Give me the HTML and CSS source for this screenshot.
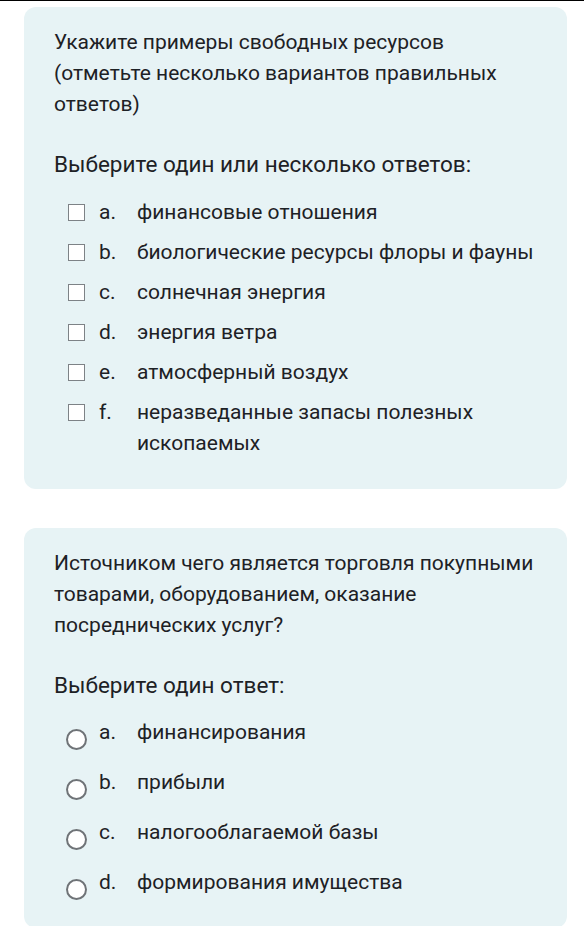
FILE: index.html
```html
<!DOCTYPE html>
<html lang="ru">
<head>
<meta charset="utf-8">
<link rel="stylesheet" href="styles.css">
</head>
<body>
<div class="page">
  <section class="card">
    <p class="qtext">Укажите примеры свободных ресурсов (отметьте несколько вариантов правильных ответов)</p>
    <p class="prompt">Выберите один или несколько ответов:</p>
    <div class="answers">
      <div class="opt"><span class="ind"><span class="box"></span></span><span class="let">a.</span><span class="txt">финансовые отношения</span></div>
      <div class="opt"><span class="ind"><span class="box"></span></span><span class="let">b.</span><span class="txt">биологические ресурсы флоры и фауны</span></div>
      <div class="opt"><span class="ind"><span class="box"></span></span><span class="let">c.</span><span class="txt">солнечная энергия</span></div>
      <div class="opt"><span class="ind"><span class="box"></span></span><span class="let">d.</span><span class="txt">энергия ветра</span></div>
      <div class="opt"><span class="ind"><span class="box"></span></span><span class="let">e.</span><span class="txt">атмосферный воздух</span></div>
      <div class="opt"><span class="ind"><span class="box"></span></span><span class="let">f.</span><span class="txt">неразведанные запасы полезных ископаемых</span></div>
    </div>
  </section>
  <section class="card card2">
    <p class="qtext">Источником чего является торговля покупными товарами, оборудованием, оказание посреднических услуг?</p>
    <p class="prompt">Выберите один ответ:</p>
    <div class="answers radios">
      <div class="opt"><span class="ind"><span class="circ"></span></span><span class="let">a.</span><span class="txt">финансирования</span></div>
      <div class="opt"><span class="ind"><span class="circ"></span></span><span class="let">b.</span><span class="txt">прибыли</span></div>
      <div class="opt"><span class="ind"><span class="circ"></span></span><span class="let">c.</span><span class="txt">налогооблагаемой базы</span></div>
      <div class="opt"><span class="ind"><span class="circ"></span></span><span class="let">d.</span><span class="txt">формирования имущества</span></div>
    </div>
  </section>
</div>
</body>
</html>
```
FILE: styles.css
```css
html, body {
  margin: 0;
  padding: 0;
  background: #ffffff;
}
body {
  font-family: Roboto, "Noto Sans", "Liberation Sans", sans-serif;
  color: #1d2125;
  height: 926px;
  overflow: hidden;
  border-top: 1px solid #000;
  box-sizing: border-box;
}
.page {
  display: flex;
  flex-direction: column;
  gap: 39px;
  padding: 6px 17px 0 24px;
}
.card {
  background: #e7f3f5;
  border-radius: 12px;
  padding: 20px 26px 30px 30px;
}
.qtext {
  margin: 0;
  font-size: 21px;
  line-height: 31px;
  padding-right: 30px;
}
.card2 .qtext {
  padding-right: 0;
}
.prompt {
  margin: 29px 0 0 0;
  font-size: 22.5px;
  line-height: 31px;
}
.answers {
  margin-top: 17px;
  display: flex;
  flex-direction: column;
  gap: 9px;
}
.opt {
  display: flex;
  align-items: flex-start;
  font-size: 21px;
  line-height: 31px;
}
.ind {
  width: 45px;
  flex: none;
  display: flex;
  padding-left: 14px;
  box-sizing: border-box;
  height: 31px;
  align-items: center;
}
.box {
  width: 17px;
  height: 17px;
  box-sizing: border-box;
  border: 1.5px solid #7d8286;
  background: #fff;
}
.let {
  width: 38px;
  flex: none;
}
.txt {
  flex: 1;
}
.card2 .answers {
  margin-top: 16px;
  gap: 19px;
}
.card2 .ind {
  padding-left: 12px;
  align-items: flex-start;
}
.circ {
  width: 21px;
  height: 21px;
  margin-top: 12px;
  box-sizing: border-box;
  border: 2px solid #6f7377;
  border-radius: 50%;
  background: #fff;
}
```
